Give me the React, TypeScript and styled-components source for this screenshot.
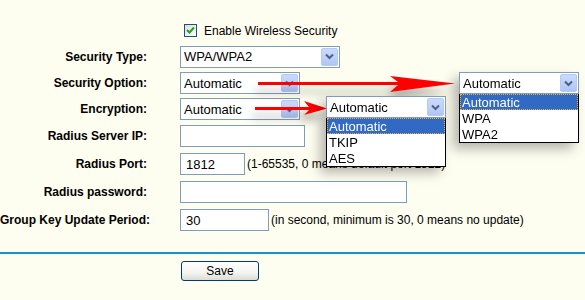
import { FC } from 'react';
import styled, { createGlobalStyle } from 'styled-components';

const GlobalStyle = createGlobalStyle`
  html, body {
    margin: 0;
    padding: 0;
    background: #fdfdf0;
  }

  body {
    font-family: 'Liberation Sans', Arial, sans-serif;
    color: #000;
  }
`;

const Page = styled.div`
  position: relative;
  width: 585px;
  height: 300px;
  overflow: hidden;
  padding-top: 18px;
  box-sizing: border-box;
  background: #fdfdf0;
`;

const Form = styled.div`
  display: flex;
  flex-direction: column;
`;

const Row = styled.div<{ $h: number }>`
  display: grid;
  grid-template-columns: 180px 1fr;
  align-items: center;
  height: ${(props) => props.$h}px;
`;

const Label = styled.span`
  text-align: right;
  padding-right: 33px;
  font-size: 12px;
  font-weight: bold;
  white-space: nowrap;
`;

const Field = styled.div`
  display: flex;
  align-items: center;
  gap: 2px;
  padding-left: 4px;
  font-size: 12px;
  white-space: nowrap;
`;

const CheckWrap = styled.label`
  display: flex;
  align-items: center;
  gap: 7px;
  font-size: 12px;
  padding-left: 0;
`;

const CheckBox = styled.span`
  display: inline-flex;
  align-items: center;
  justify-content: center;
  width: 11px;
  height: 11px;
  border: 1px solid #1c5180;
  background: linear-gradient(135deg, #dcdcd7, #fff);
`;

const SelectBox = styled.div<{ $w: number }>`
  position: relative;
  display: flex;
  align-items: center;
  width: ${(props) => props.$w}px;
  height: 22px;
  box-sizing: border-box;
  border: 1px solid #7f9db9;
  background: #fff;
  font-size: 13px;
  padding-left: 3px;
`;

const SelectButton = styled.span`
  position: absolute;
  right: 1px;
  top: 1px;
  bottom: 1px;
  width: 17px;
  box-sizing: border-box;
  border: 1px solid #b6c9f4;
  border-radius: 2px;
  background: linear-gradient(180deg, #cad9fd 0%, #bccffa 60%, #b0c4f3 100%);
  display: flex;
  align-items: center;
  justify-content: center;
`;

const TextInput = styled.div<{ $w: number }>`
  width: ${(props) => props.$w}px;
  height: 22px;
  box-sizing: border-box;
  border: 1px solid #7f9db9;
  background: #fff;
  font-size: 13px;
  padding-left: 5px;
  display: flex;
  align-items: center;
`;

const Hint = styled.span`
  font-size: 12px;
`;

const Divider = styled.div`
  margin-top: 18px;
  height: 2px;
  background: #0d97c6;
`;

const ButtonRow = styled.div`
  padding: 7px 0 0 181px;
`;

const SaveButton = styled.button`
  width: 78px;
  height: 20px;
  padding: 0;
  border: 1px solid #003c74;
  border-radius: 3px;
  background: linear-gradient(180deg, #ffffff 0%, #f4f4f0 60%, #dcdcd4 100%);
  font-family: 'Liberation Sans', Arial, sans-serif;
  font-size: 12px;
  color: #000;
`;

const Popup = styled.div<{ $x: number; $y: number }>`
  position: absolute;
  left: ${(props) => props.$x}px;
  top: ${(props) => props.$y}px;
  width: 120px;
  filter: drop-shadow(-6px 6px 6px rgba(0, 0, 0, 0.28));
`;

const OptionList = styled.div`
  border: 1px solid #000;
  border-top: none;
  background: #fff;
  display: flex;
  flex-direction: column;
`;

const Option = styled.div<{ $active?: boolean }>`
  height: 16px;
  line-height: 15px;
  font-size: 13px;
  padding-left: 1px;
  box-sizing: border-box;
  color: ${(props) => (props.$active ? '#fff' : '#000')};
  background: ${(props) => (props.$active ? '#316ac5' : '#fff')};
  border: 1px ${(props) => (props.$active ? 'dotted #f0b040' : 'solid transparent')};
`;

const ArrowLayer = styled.svg`
  position: absolute;
  left: 0;
  top: 0;
  overflow: visible;
  filter: drop-shadow(-3px 8px 4px rgba(0, 0, 0, 0.3));
`;

const Chevron: FC = () => (
  <svg width="9" height="7" viewBox="0 0 9 7">
    <path d="M1 1.5 L4.5 5 L8 1.5" fill="none" stroke="#4d6185" strokeWidth="2" />
  </svg>
);

const Select: FC<{ w: number; value: string }> = ({ w, value }) => (
  <SelectBox $w={w}>
    {value}
    <SelectButton>
      <Chevron />
    </SelectButton>
  </SelectBox>
);

const Dropdown: FC<{ x: number; y: number; options: string[] }> = ({ x, y, options }) => (
  <Popup $x={x} $y={y}>
    <Select w={120} value={options[0]} />
    <OptionList>
      {options.map((opt, i) => (
        <Option key={opt} $active={i === 0}>
          {opt}
        </Option>
      ))}
    </OptionList>
  </Popup>
);

export default function App() {
  return (
    <>
      <GlobalStyle />
      <Page>
        <Form>
          <Row $h={25}>
            <span />
            <Field>
              <CheckWrap>
                <CheckBox>
                  <svg width="9" height="9" viewBox="0 0 9 9">
                    <path d="M1 4 L3.5 6.5 L8 1.5" fill="none" stroke="#21a121" strokeWidth="2" />
                  </svg>
                </CheckBox>
                Enable Wireless Security
              </CheckWrap>
            </Field>
          </Row>
          <Row $h={27}>
            <Label>Security Type:</Label>
            <Field style={{ paddingLeft: 0 }}>
              <Select w={160} value="WPA/WPA2" />
            </Field>
          </Row>
          <Row $h={26}>
            <Label>Security Option:</Label>
            <Field style={{ paddingLeft: 0 }}>
              <Select w={120} value="Automatic" />
            </Field>
          </Row>
          <Row $h={26}>
            <Label>Encryption:</Label>
            <Field style={{ paddingLeft: 0 }}>
              <Select w={120} value="Automatic" />
            </Field>
          </Row>
          <Row $h={28}>
            <Label>Radius Server IP:</Label>
            <Field style={{ paddingLeft: 0 }}>
              <TextInput $w={125} />
            </Field>
          </Row>
          <Row $h={28}>
            <Label>Radius Port:</Label>
            <Field style={{ paddingLeft: 0 }}>
              <TextInput $w={65}>1812</TextInput>
              <Hint>(1-65535, 0 means default port 1812)</Hint>
            </Field>
          </Row>
          <Row $h={28}>
            <Label>Radius password:</Label>
            <Field style={{ paddingLeft: 0 }}>
              <TextInput $w={227} />
            </Field>
          </Row>
          <Row $h={28}>
            <Label>Group Key Update Period:</Label>
            <Field style={{ paddingLeft: 0 }}>
              <TextInput $w={89}>30</TextInput>
              <Hint>(in second, minimum is 30, 0 means no update)</Hint>
            </Field>
          </Row>
        </Form>
        <Divider />
        <ButtonRow>
          <SaveButton>Save</SaveButton>
        </ButtonRow>

        <ArrowLayer width="585" height="300" viewBox="0 0 585 300">
          <path
            d="M258 82 L398 82 L390 76 L455 83.5 L390 92 L398 85 L258 85 Z"
            fill="#ff0000"
          />
          <path
            d="M255 107 L309 107 L304 101 L327 108.5 L304 115 L309 110 L255 110 Z"
            fill="#ff0000"
          />
        </ArrowLayer>

        <Dropdown x={459} y={72} options={['Automatic', 'WPA', 'WPA2']} />
        <Dropdown x={326} y={96} options={['Automatic', 'TKIP', 'AES']} />
      </Page>
    </>
  );
}
